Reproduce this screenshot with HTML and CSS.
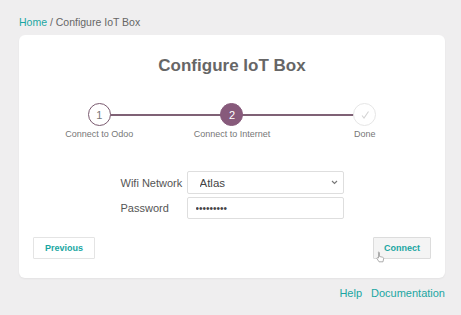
FILE: index.html
```html
<!DOCTYPE html>
<html lang="en">
<head>
    <meta charset="UTF-8">
    <meta name="viewport" content="width=device-width, initial-scale=1.0">
    <title>Configure IoT Box</title>
    <link rel="stylesheet" href="styles.css">
</head>
<body>

    <!-- Breadcrumb -->
    <div class="breadcrumb">
        <a href="#">Home</a> / Configure IoT Box
    </div>

    <!-- Main Card -->
    <div class="card">
        <h1>Configure IoT Box</h1>

        <!-- Progress steps -->
        <div class="steps">
            <div class="step done">
                <span class="circle">1</span>
                <span class="step-label">Connect to Odoo</span>
            </div>
            <div class="step active">
                <span class="circle">2</span>
                <span class="step-label">Connect to Internet</span>
            </div>
            <div class="step todo">
                <span class="circle">
                    <svg width="12" height="12" viewBox="0 0 12 12"><path d="M3 6.5 L5 9 L9.5 2.5" fill="none" stroke="#d4d4d4" stroke-width="1.1"/></svg>
                </span>
                <span class="step-label">Done</span>
            </div>
        </div>

        <!-- Wifi form -->
        <form class="wifi-form">
            <label for="essid">Wifi Network</label>
            <div class="select-wrap">
                <select id="essid" class="input-field">
                    <option>Atlas</option>
                </select>
                <svg class="chevron" width="7" height="5" viewBox="0 0 7 5"><path d="M1 1 L3.5 3.5 L6 1" fill="none" stroke="#777" stroke-width="1.1"/></svg>
            </div>
            <label for="password">Password</label>
            <input type="password" id="password" class="input-field" value="secret123">
        </form>

        <div class="actions">
            <button type="button" class="button">Previous</button>
            <button type="button" class="button hover">Connect
                <svg class="cursor" width="9" height="12" viewBox="0 0 9 12"><path d="M2.5 1 C3.2 1 3.5 1.4 3.5 2 L3.5 5.5 L6.5 6.2 C7.3 6.4 7.8 7 7.6 7.8 L7 10.8 L3 10.8 L1 7.6 C0.7 7.1 1 6.5 1.6 6.6 L2.5 7 L2.5 2 C2.5 1.4 2 1 2.5 1 Z" fill="#ffffff" stroke="#999" stroke-width="0.8"/></svg>
            </button>
        </div>
    </div>

    <!-- Footer links -->
    <div class="footer">
        <a href="#">Help</a>
        <a href="#">Documentation</a>
    </div>

</body>
</html>
```

FILE: styles.css
```css
body {
    font-family: "Liberation Sans", Arial, sans-serif;
    margin: 0;
    padding: 15px 16px 0 19px;
    background: #efeeef;
    color: #666;
}
a {
    color: #1aa6a2;
    text-decoration: none;
}
/* Breadcrumb */
.breadcrumb {
    font-size: 10.5px;
    line-height: 14px;
    color: #666;
}
/* Card */
.card {
    margin-top: 6px;
    background: #ffffff;
    border-radius: 6px;
    box-shadow: 0 1px 2px rgba(0, 0, 0, 0.05);
    padding: 20px 14px 19px;
}
.card h1 {
    margin: 0;
    text-align: center;
    font-size: 17px;
    line-height: 22px;
    font-weight: bold;
    color: #666;
}
/* Steps */
.steps {
    display: grid;
    grid-template-columns: repeat(3, 1fr);
    margin-top: 26px;
}
.step {
    position: relative;
    display: flex;
    flex-direction: column;
    align-items: center;
}
.step:not(:last-child)::after {
    content: "";
    position: absolute;
    top: 11px;
    left: 50%;
    width: 100%;
    height: 2px;
    background: #7f6175;
    z-index: 0;
}
.circle {
    position: relative;
    z-index: 1;
    width: 21px;
    height: 21px;
    border-radius: 50%;
    border: 1.5px solid #7a5a6f;
    background: #ffffff;
    display: flex;
    align-items: center;
    justify-content: center;
    font-size: 11px;
    color: #777;
}
.step.active .circle {
    background: #875a7b;
    border-color: #875a7b;
    color: #ffffff;
}
.step.todo .circle {
    border-color: #e6e6e6;
}
.step-label {
    margin-top: 3px;
    font-size: 9px;
    line-height: 11px;
    color: #777;
}
/* Form */
.wifi-form {
    display: grid;
    grid-template-columns: 66px 157px;
    gap: 3px 0;
    justify-content: center;
    align-items: center;
    margin-top: 31px;
}
.wifi-form label {
    font-size: 11px;
    color: #555;
    white-space: nowrap;
}
.select-wrap {
    position: relative;
}
.input-field {
    display: block;
    width: 100%;
    height: 23px;
    box-sizing: border-box;
    border: 1px solid #dedede;
    border-radius: 2px;
    background: #ffffff;
    font-family: inherit;
    font-size: 11.5px;
    color: #444;
    padding: 0 12px;
    -webkit-appearance: none;
    appearance: none;
}
#password {
    height: 22px;
    font-size: 10px;
    padding: 0 8px;
}
.chevron {
    position: absolute;
    right: 6px;
    top: 9px;
}
/* Buttons */
.actions {
    display: flex;
    justify-content: space-between;
    margin-top: 18px;
}
.button {
    position: relative;
    height: 22px;
    padding: 0 11px;
    border: 1px solid #e4e4e4;
    border-radius: 1px;
    background: #ffffff;
    color: #1aa6a2;
    font-family: inherit;
    font-weight: bold;
    font-size: 9px;
    cursor: pointer;
}
.button.hover {
    background: #f4f4f4;
    border-color: #dcdcdc;
    padding: 0 10px;
}
.cursor {
    position: absolute;
    left: 2px;
    top: 13px;
}
/* Footer */
.footer {
    display: flex;
    justify-content: flex-end;
    gap: 9px;
    margin-top: 7px;
    font-size: 11px;
    line-height: 16px;
}
```
